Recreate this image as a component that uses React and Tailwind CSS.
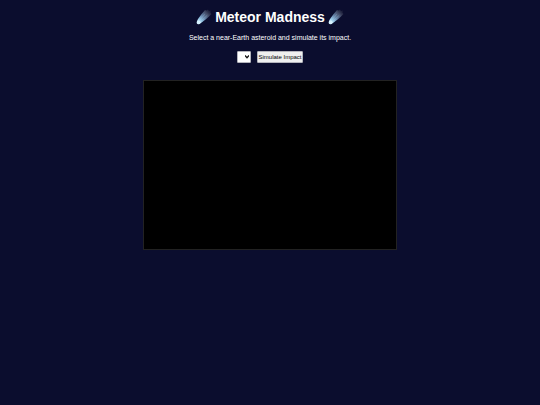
function Comet({ id }) {
  return (
    <svg viewBox="0 0 32 32" className="h-4 w-4 shrink-0" aria-hidden="true">
      <defs>
        <linearGradient id={id} x1="5" y1="27" x2="28" y2="4" gradientUnits="userSpaceOnUse">
          <stop offset="0" stopColor="#d2f0ff" />
          <stop offset="0.2" stopColor="#94c6e6" />
          <stop offset="0.45" stopColor="#6583a8" />
          <stop offset="0.75" stopColor="#48506c" stopOpacity="0.9" />
          <stop offset="1" stopColor="#34384e" stopOpacity="0.35" />
        </linearGradient>
      </defs>
      <path d="M1.500 26 C3 20 12 9 18 2 L21 3 L24 1 L26 4 L30 3 L29 7 L31 10 C25 17 12 27 7 30 C3 31.500 0.500 29 1.500 26 Z" fill={`url(#${id})`} />
      <path d="M7 23 L17 11 M10 24 L22 13" stroke="#b9dcf0" strokeWidth="1.500" strokeLinecap="round" opacity="0.3" />
      <circle cx="5.500" cy="26.500" r="3.500" fill="#d6f3ff" />
    </svg>
  );
}

export default function App() {
  return (
    <main className="flex min-h-screen flex-col items-center bg-[#0b0d2e] pt-2 font-['Liberation_Sans',Arial,sans-serif] text-white">
      <h1 className="flex items-center gap-[3px] text-[14px] leading-[18px] font-bold">
        <Comet id="comet-left" />
        Meteor Madness
        <Comet id="comet-right" />
      </h1>
      <p className="mt-2 text-[7px] leading-2">Select a near-Earth asteroid and simulate its impact.</p>
      <div className="mt-[9px] flex items-center gap-1.5">
        <div className="relative">
          <select aria-label="Asteroid" className="block h-3 w-3.5 appearance-none rounded-[1px] border border-[#b4b4bc] bg-white text-[6px] text-black" />
          <svg viewBox="0 0 8 8" className="pointer-events-none absolute top-1 right-0.5 h-1 w-1" aria-hidden="true">
            <path d="M0 1 L4 5.500 L8 1" fill="none" stroke="#111111" strokeWidth="2.500" />
          </svg>
        </div>
        <button type="button" className="h-3 rounded-[1px] border border-[#b4b4bc] bg-[#efefef] text-[6px] leading-none whitespace-nowrap text-black">
          Simulate Impact
        </button>
      </div>
      <canvas aria-label="Impact simulation" className="mt-[17px] aspect-[254/170] w-[47%] border border-[#222222] bg-black" />
    </main>
  );
}
